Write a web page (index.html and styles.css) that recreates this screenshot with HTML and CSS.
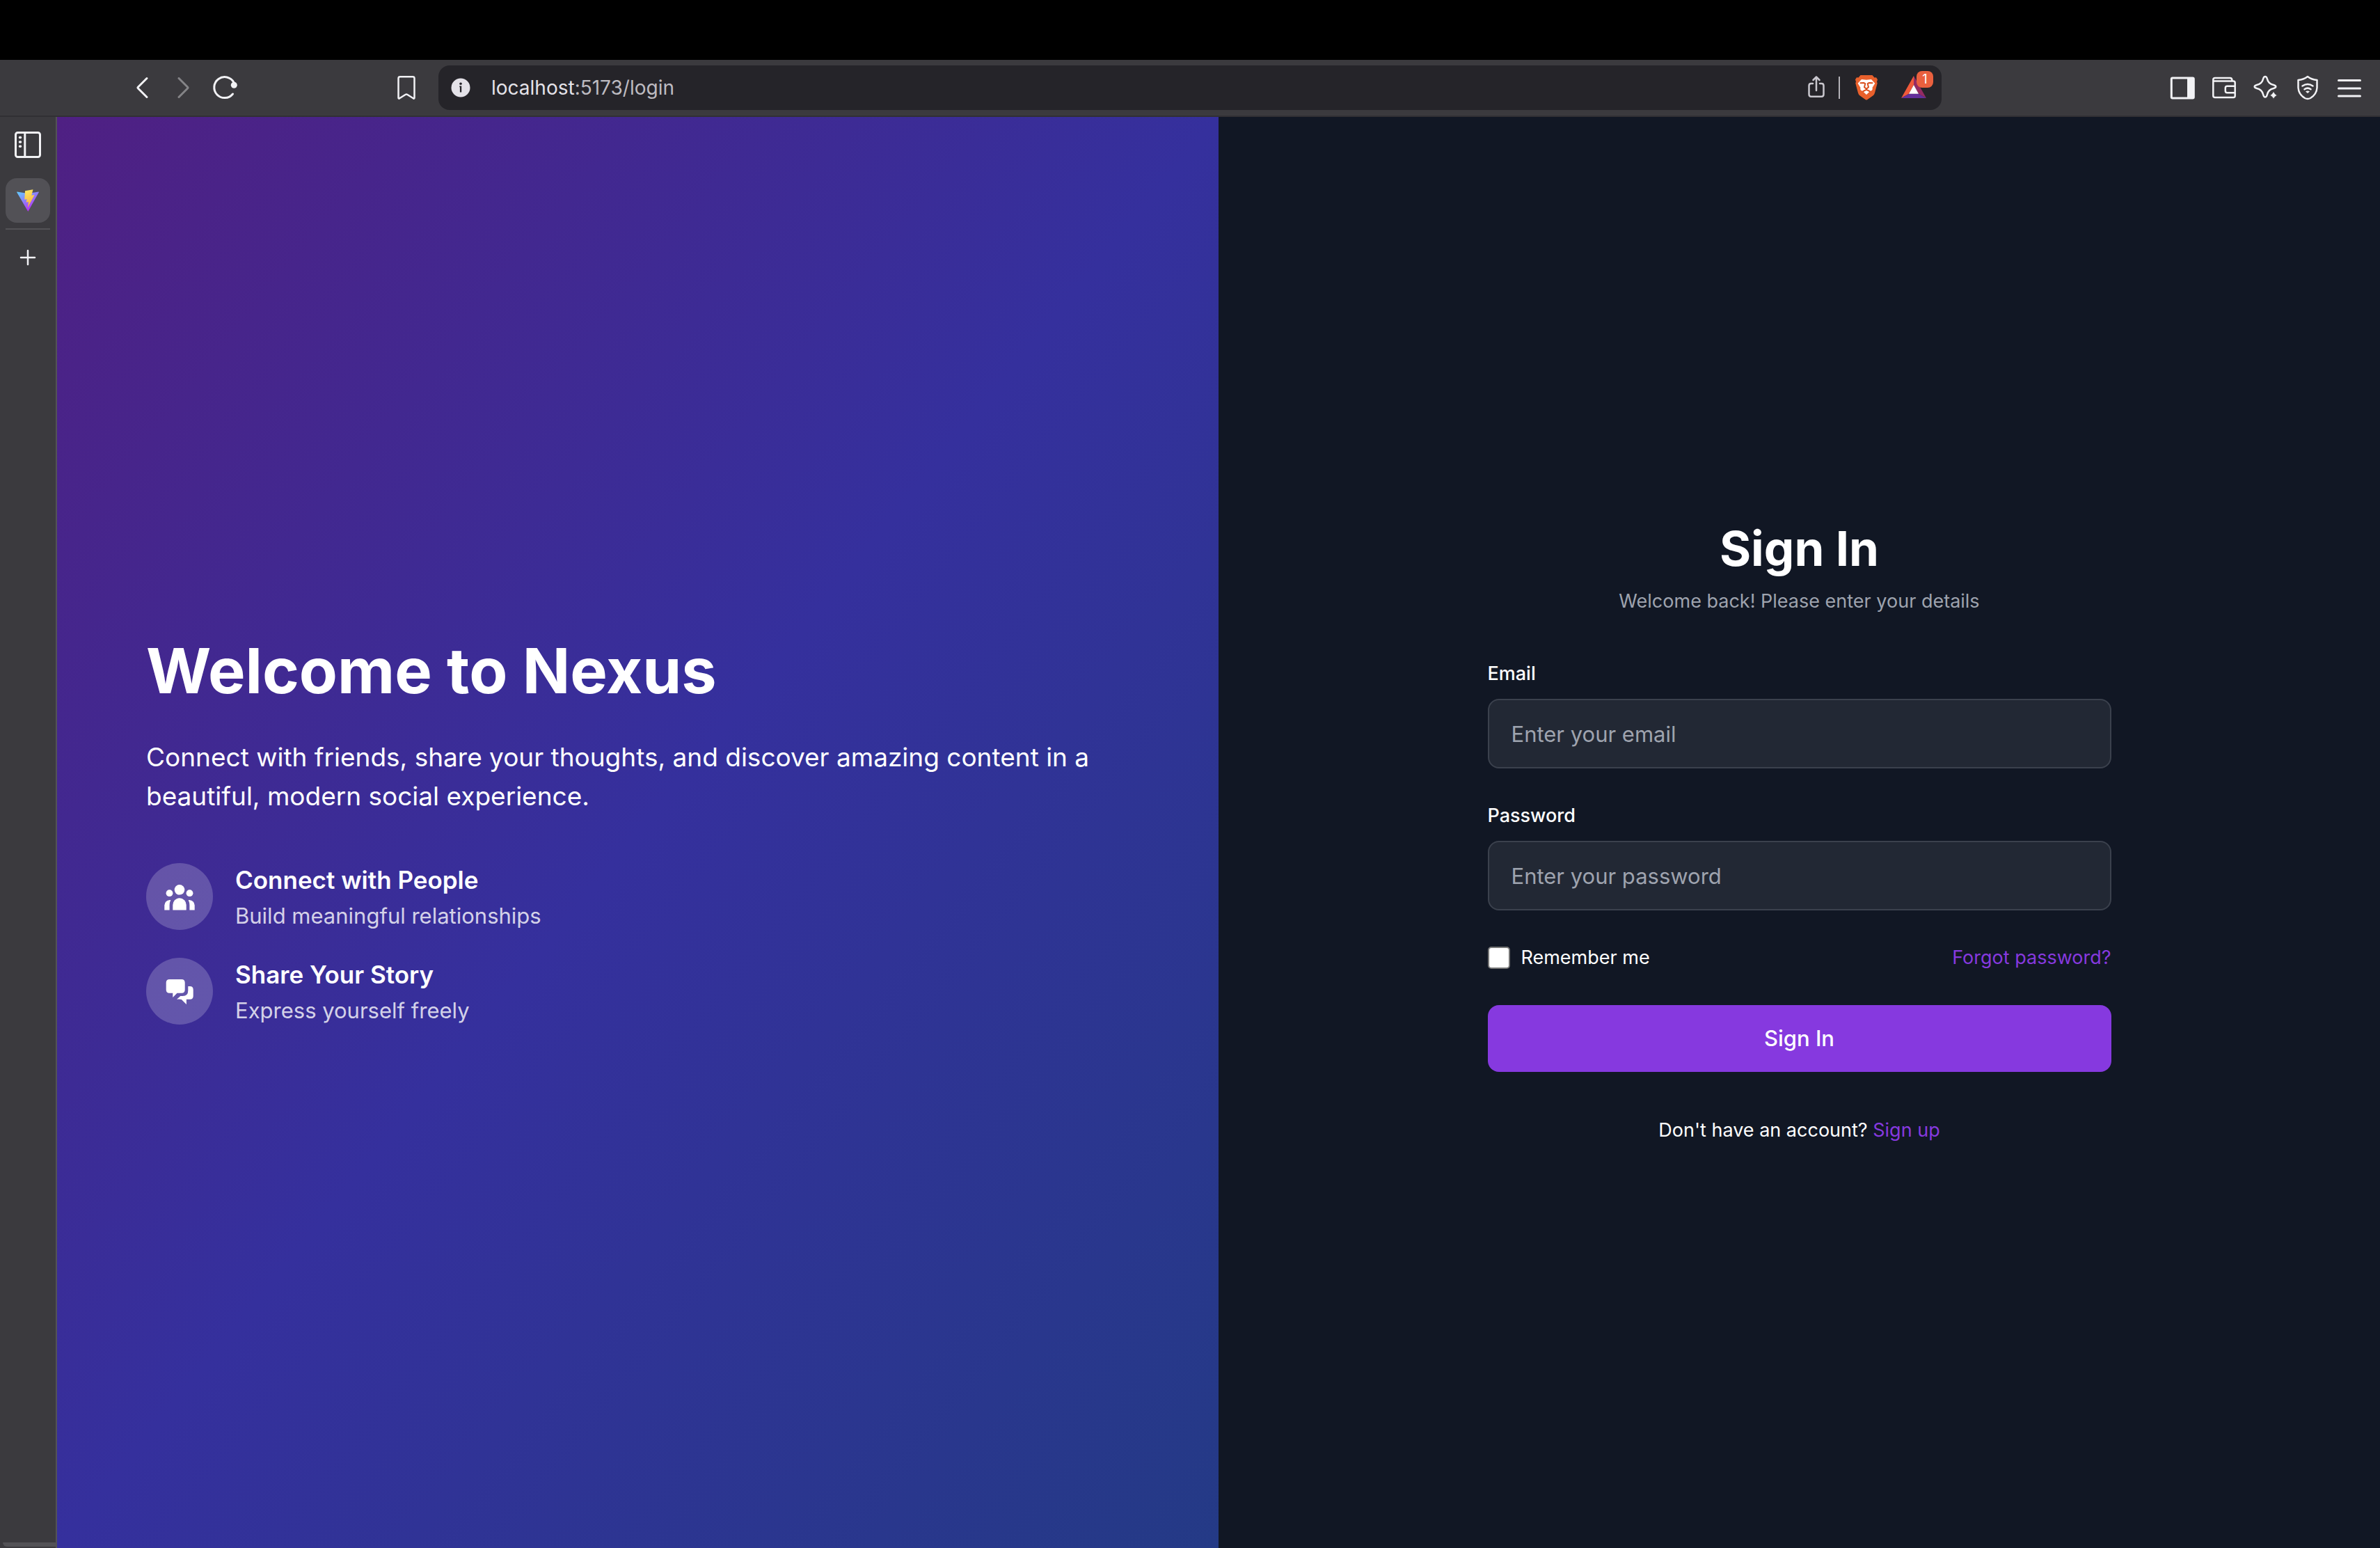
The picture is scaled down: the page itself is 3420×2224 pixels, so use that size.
FILE: index.html
```html
<!DOCTYPE html>
<html lang="en">
<head>
<meta charset="utf-8">
<title>Nexus</title>
<link rel="stylesheet" href="styles.css">
</head>
<body>
<div class="window">
  <div class="menubar"></div>

  <header class="toolbar">
    <nav class="toolbar-side nav-side" aria-label="Navigation">
      <button class="tool" type="button" aria-label="Back">
        <svg width="60" height="80" viewBox="0 0 60 80" class="line"><path d="M37 26.5 L24.5 39 Q23.5 40 24.5 41 L37 53.5"/></svg>
      </button>
      <button class="tool dim" type="button" aria-label="Forward">
        <svg width="60" height="80" viewBox="0 0 60 80" class="line"><path d="M23 26.5 L35.500 39 Q36.500 40 35.500 41 L23 53.500"/></svg>
      </button>
      <button class="tool" type="button" aria-label="Reload">
        <svg width="60" height="80" viewBox="0 0 60 80" class="line"><path d="M40.500 49 A15 15 0 1 1 42 32.500"/><circle cx="42.300" cy="36.300" r="4.500" class="solid"/></svg>
      </button>
      <button class="tool bookmark" type="button" aria-label="Bookmark">
        <svg width="60" height="80" viewBox="0 0 60 80" class="line thin"><path d="M18.500 26.500 Q18.500 24.300 21 24.300 H39 Q41.500 24.300 41.500 26.500 V54.500 Q41.500 56.500 39.500 55 L31.500 50 Q30 49.200 28.500 50 L20.500 55 Q18.500 56.500 18.500 54.500 Z"/></svg>
      </button>
    </nav>

    <div class="urlbar">
      <button class="site-info" type="button" aria-label="Site information">
        <svg width="28" height="28" viewBox="0 0 28 28"><circle cx="14" cy="14" r="13.500" fill="#e4e2e8"/><circle cx="14" cy="8.300" r="1.800" fill="#252429"/><path d="M12.300 11.500H15.200V20.500H12.900V13.300H12.300Z" fill="#252429"/></svg>
      </button>
      <div class="url">localhost<span class="url-rest">:5173/login</span></div>
      <button class="url-tool share" type="button" aria-label="Share">
        <svg width="44" height="64" viewBox="0 0 44 64" class="line soft"><path d="M17 26 H14.500 Q11.500 26 11.500 29 V41.500 Q11.500 44.700 14.500 44.700 H29.500 Q32.500 44.700 32.500 41.500 V29 Q32.500 26 29.500 26 H27 M22 36 V16.500 M17.500 21 L22 16.500 L26.500 21"/></svg>
      </button>
      <div class="url-divider"></div>
      <button class="url-tool" type="button" aria-label="Shields">
        <svg width="56" height="64" viewBox="0 0 56 64">
          <path fill="#e8602c" d="M19.500 14 H36.500 L39.500 17.500 L42 17.200 L44 20.300 L43 23.500 L43.700 25.500 L40 39.500 Q39.400 42 37.300 43.500 L29.500 49 Q28 50 26.500 49 L18.700 43.500 Q16.600 42 16 39.500 L12.300 25.500 L13 23.500 L12 20.300 L14 17.200 L16.500 17.500 Z"/>
          <path fill="#fff" d="M21 20 L28 20.800 L35 20 L40.300 25.800 L36.500 32 Q37.500 34 35.700 36 L33.500 36.800 L28 42 L22.500 36.800 L20.300 36 Q18.500 34 19.500 32 L15.700 25.800 Z"/>
          <path fill="none" stroke="#d9501f" stroke-width="2" stroke-linejoin="round" stroke-linecap="round" d="M19.500 25.300 L24 25 L26.300 26.200 L25 31.200 L28 33.800 L31 31.200 L29.700 26.200 L32 25 L36.500 25.300 M28 33.800 V35 M23.500 37 L28 34.800 L32.500 37"/>
        </svg>
      </button>
      <button class="url-tool rewards" type="button" aria-label="Rewards">
        <svg width="56" height="64" viewBox="0 0 56 64">
          <path fill="#f0593a" d="M28 15 L10 47 L21 40.700 L28 28Z"/>
          <path fill="#952b63" d="M28 15 L46 47 L35 40.700 L28 28Z"/>
          <path fill="#63309a" d="M10 47 H46 L35 40.700 H21Z"/>
          <path fill="#fff" d="M28 28 L35 40.700 H21Z"/>
        </svg>
        <span class="badge">1</span>
      </button>
    </div>

    <div class="toolbar-side menu-side">
      <button class="tool" type="button" aria-label="Side panel">
        <svg width="60" height="80" viewBox="0 0 60 80" class="line"><rect x="14.300" y="26" width="32" height="29" rx="1.500"/><path class="solid" d="M37 26H45V55H37Z"/></svg>
      </button>
      <button class="tool" type="button" aria-label="Wallet">
        <svg width="60" height="80" viewBox="0 0 60 80" class="line thin"><path d="M14.300 31 V51.500 Q14.300 54 17 54 H43.500 Q45.700 54 45.700 51.500 V33 Q45.700 30.500 43 30.500 H14.300 V28.500 Q14.300 26 17 26 H38.500 Q41.500 26 41.500 30 M45.700 37.800 H34.500 Q31.800 37.800 31.800 40.500 V44.500 Q31.800 47.300 34.500 47.300 H45.700"/></svg>
      </button>
      <button class="tool" type="button" aria-label="Assistant">
        <svg width="60" height="80" viewBox="0 0 60 80" class="line thin"><path d="M29 24 Q31 24 31.800 27 Q33.500 34.500 41 36 Q44.300 37 44.300 38.500 Q44.300 40 41 41 Q33.500 42.500 31.800 50 Q31 53.500 29 53.500 Q27 53.500 26.200 50 Q24.500 42.500 17 41 Q13.700 40 13.700 38.500 Q13.700 37 17 36 Q24.500 34.500 26.200 27 Q27 24 29 24Z"/><path fill="#f2f2f5" stroke="#3b3a3e" stroke-width="1" d="M41 44 Q42 50 47.500 51 Q42 52 41 57.500 Q40 52 34.500 51 Q40 50 41 44Z"/></svg>
      </button>
      <button class="tool" type="button" aria-label="VPN">
        <svg width="60" height="80" viewBox="0 0 60 80" class="line thin"><path d="M30 24 Q36 28.500 43.500 29 V40 Q43 49.500 34 55 Q30 57 26 55 Q17 49.500 16.500 40 V29 Q24 28.500 30 24Z"/><path d="M22.500 37.500 Q30 32.500 37.500 37.500 M25.500 42.300 Q30 39 34.500 42.300"/><path class="solid" d="M27 45.500 Q30 43.500 33 45.500 L30 48Z"/></svg>
      </button>
      <button class="tool" type="button" aria-label="Menu">
        <svg width="60" height="80" viewBox="0 0 60 80" class="line"><path d="M14.500 29.500H45.500M14.500 41H45.500M14.500 52H45.500"/></svg>
      </button>
    </div>
  </header>

  <div class="workspace">
    <aside class="tabs">
      <button class="tab-tool" type="button" aria-label="Toggle tabs">
        <svg width="80" height="80" viewBox="0 0 80 80" class="line"><rect x="22.500" y="22.500" width="35" height="35" rx="3"/><path d="M35.800 22.500V57.500"/><path stroke-width="3.500" d="M28.500 29.500h1M28.500 36h1M28.500 42.300h1"/></svg>
      </button>
      <button class="tab" type="button" aria-label="Nexus tab">
        <svg width="32" height="32" viewBox="0 0 32 32">
          <defs>
            <linearGradient id="vee" x1="0" y1="0" x2="0.600" y2="0.900"><stop offset="0" stop-color="#5fd0ff"/><stop offset="1" stop-color="#b535f5"/></linearGradient>
            <linearGradient id="bolt" x1="0.400" y1="0" x2="0.600" y2="1"><stop offset="0" stop-color="#ffe760"/><stop offset="1" stop-color="#f6a93b"/></linearGradient>
          </defs>
          <path fill="url(#vee)" d="M0.500 3.500 L16 6 L31.500 3.500 Q32 3.700 31.800 4.300 L16.700 31.300 Q16.300 32 15.900 31.300 L0.200 4.300 Q0 3.600 0.500 3.500Z"/>
          <path fill="url(#bolt)" d="M23.500 0.200 L12 2.300 L11.300 14.800 L14.600 14 L13.700 18.800 L17 18 L15.800 26.500 L25.600 8 L21.300 8.700Z"/>
        </svg>
      </button>
      <div class="tab-divider"></div>
      <button class="tab-tool" type="button" aria-label="New tab">
        <svg width="80" height="80" viewBox="0 0 80 80" class="line thin"><path d="M30 40H50M40 30V50"/></svg>
      </button>
      <div class="tabs-foot"></div>
    </aside>

    <main class="page">
      <section class="hero">
        <h1>Welcome to Nexus</h1>
        <p class="lead">Connect with friends, share your thoughts, and discover amazing content in a beautiful, modern social experience.</p>
        <ul class="features">
          <li class="feature">
            <span class="feature-icon">
              <svg width="96" height="96" viewBox="0 0 96 96" fill="#fff"><circle cx="48" cy="38.300" r="7.300"/><circle cx="33.500" cy="43.200" r="4.900"/><circle cx="62.500" cy="43.200" r="4.900"/><path d="M38.300 67.400 V60 A9.700 9.700 0 0 1 57.700 60 V67.400Z"/><path d="M26.300 67.400 V60.500 Q27 53.500 34 53 H35.300 Q33.600 56.500 33.600 60.500 V67.400Z"/><path d="M69.700 67.400 V60.500 Q69 53.500 62 53 H60.700 Q62.400 56.500 62.400 60.500 V67.400Z"/></svg>
            </span>
            <div>
              <h3>Connect with People</h3>
              <p>Build meaningful relationships</p>
            </div>
          </li>
          <li class="feature">
            <span class="feature-icon">
              <svg width="96" height="96" viewBox="0 0 96 96" fill="#fff"><path d="M33.500 31 H51 Q55.700 31 55.700 35.700 V46 Q55.700 50.700 51 50.700 H44.500 L38.300 57 V50.700 H33.500 Q28.700 50.700 28.700 46 V35.700 Q28.700 31 33.500 31Z"/><path d="M60.300 41 H63 Q67.700 41 67.700 46 V55 Q67.700 59.700 63 59.700 H57.900 V67 L50.800 60 Q48 59.200 44 59.700 L49.300 55 H52.500 Q60.300 55 60.300 47Z"/></svg>
            </span>
            <div>
              <h3>Share Your Story</h3>
              <p>Express yourself freely</p>
            </div>
          </li>
        </ul>
      </section>

      <section class="auth">
        <form class="form">
          <div class="form-head">
            <h2>Sign In</h2>
            <p>Welcome back! Please enter your details</p>
          </div>
          <div class="field">
            <label for="email">Email</label>
            <input id="email" class="text-input" type="email" placeholder="Enter your email">
          </div>
          <div class="field">
            <label for="password">Password</label>
            <input id="password" class="text-input" type="password" placeholder="Enter your password">
          </div>
          <div class="options">
            <label class="remember"><input class="check" type="checkbox">Remember me</label>
            <a href="#forgot">Forgot password?</a>
          </div>
          <button class="submit" type="submit">Sign In</button>
          <p class="signup">Don't have an account? <a href="#signup">Sign up</a></p>
        </form>
      </section>
    </main>
  </div>
</div>
</body>
</html>
```
FILE: styles.css
```css
*, *::before, *::after { box-sizing: border-box; }

body, h1, h2, h3, p, ul { margin: 0; padding: 0; }

body {
  background: #3b3a3e;
  color: #fff;
  font-family: Inter, "Liberation Sans", sans-serif;
  font-size: 27px;
  line-height: 40px;
}

button {
  border: 0;
  padding: 0;
  background: none;
  color: inherit;
  font: inherit;
}

svg { display: block; }
a { color: #8639df; text-decoration: none; }

.window {
  display: flex;
  flex-direction: column;
  min-height: 100vh;
}

/* Browser chrome */
.menubar { height: 86px; background: #000; }

.toolbar {
  display: grid;
  grid-template-columns: 1fr minmax(0, 2160px) 1fr;
  align-items: center;
  height: 82px;
  border-bottom: 2px solid #313034;
}

.toolbar-side { display: flex; }
.nav-side { padding: 0 16px 0 174px; }
.menu-side { justify-content: flex-end; padding-right: 14px; }
.bookmark { margin-left: auto; }
.dim { opacity: 0.4; }

.line {
  fill: none;
  stroke: #f2f2f5;
  stroke-width: 3;
  stroke-linecap: round;
  stroke-linejoin: round;
}
.thin { stroke-width: 2.5; }
.soft { stroke: #c9c7ce; stroke-width: 2.5; }
.solid { fill: #f2f2f5; stroke: none; }

.urlbar {
  display: flex;
  align-items: center;
  height: 64px;
  padding: 0 12px 0 18px;
  border-radius: 16px;
  background: #252429;
}
.url {
  flex: 1;
  padding-left: 30px;
  color: #e4e2e8;
  font-size: 28px;
}
.url-rest { color: #bdbbc1; }
.url-divider {
  width: 2px;
  height: 32px;
  margin: 0 10px;
  background: #b4b2b8;
}
.rewards { position: relative; margin-left: 12px; }
.badge {
  position: absolute;
  top: 8px;
  right: 0;
  width: 24px;
  height: 24px;
  border-radius: 8px;
  background: #e9603e;
  font-size: 18px;
  line-height: 24px;
  text-align: center;
}

.workspace { display: flex; flex: 1; }

.tabs {
  display: flex;
  flex-direction: column;
  align-items: center;
  width: 82px;
  border-right: 2px solid #535256;
}
.tab {
  display: grid;
  place-items: center;
  width: 64px;
  height: 64px;
  margin: 8px 0;
  border-radius: 16px;
  background: #525156;
}
.tab-divider { width: 64px; height: 2px; background: #535256; }
.tabs-foot {
  align-self: stretch;
  height: 6px;
  margin: auto 0 2px 4px;
  border-bottom-left-radius: 8px;
  background: #535256;
}

/* Page */
.page {
  display: grid;
  grid-template-columns: 1fr 1fr;
  flex: 1;
  background: #111724;
}

.hero {
  display: flex;
  flex-direction: column;
  justify-content: center;
  padding: 0 128px;
  background: linear-gradient(to bottom right, #4f2083, #35309d, #243a86);
}
h1 { font-size: 90px; font-weight: 700; line-height: 96px; }
.lead { margin: 48px 0 64px; font-size: 37px; line-height: 56px; }

.features {
  display: flex;
  flex-direction: column;
  gap: 32px;
  list-style: none;
}
.feature { display: flex; align-items: center; gap: 32px; }
.feature-icon { border-radius: 50%; background: rgba(255, 255, 255, 0.2); }
.feature h3 { font-size: 35px; font-weight: 600; line-height: 56px; }
.feature p { color: rgba(255, 255, 255, 0.8); font-size: 31px; line-height: 48px; }

.auth { display: flex; align-items: center; justify-content: center; }
.form { width: 100%; max-width: 896px; }
.form-head { margin-bottom: 64px; text-align: center; }
.form-head p { margin-top: 16px; color: #9ea3ae; }
h2 { font-size: 69px; font-weight: 700; line-height: 80px; }

.field { margin-bottom: 48px; }
.field label { display: block; margin-bottom: 16px; font-weight: 500; }
.text-input {
  display: block;
  width: 100%;
  height: 100px;
  padding: 0 32px;
  border: 2px solid #3b414d;
  border-radius: 16px;
  background: #222834;
  color: #fff;
  font: inherit;
  font-size: 31px;
}
.text-input::placeholder { color: #9ea3ae; opacity: 1; }

.options {
  display: flex;
  align-items: center;
  justify-content: space-between;
  margin-bottom: 48px;
}
.remember { display: flex; align-items: center; gap: 16px; }
.check {
  appearance: none;
  width: 32px;
  height: 32px;
  margin: 0;
  border: 2px solid #767676;
  border-radius: 5px;
  background: #fff;
}
.submit {
  display: block;
  width: 100%;
  height: 96px;
  border-radius: 16px;
  background: #8639df;
  font-size: 31px;
  font-weight: 500;
}
.signup { margin-top: 64px; text-align: center; }
```
